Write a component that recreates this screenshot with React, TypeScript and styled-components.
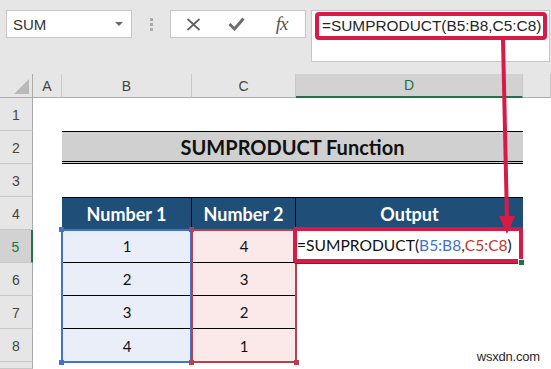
import styled, { createGlobalStyle } from "styled-components";

const GlobalStyle = createGlobalStyle`
  html, body {
    margin: 0;
    padding: 0;
    background: #ffffff;
  }
  body {
    font-family: "Liberation Sans", Arial, sans-serif;
  }
`;

const RED = "#d81b46";
const GREEN = "#217346";

const columns = ["A", "B", "C", "D", ""];
const rows = [1, 2, 3, 4, 5, 6, 7, 8, 9];
const data = [
  [1, 4],
  [2, 3],
  [3, 2],
  [4, 1],
];

export default function App() {
  return (
    <>
      <GlobalStyle />
      <Page>
        <TopBar>
          <NameBox>
            SUM
            <Caret />
          </NameBox>
          <Grip>
            <Dot />
            <Dot />
            <Dot />
          </Grip>
          <Actions>
            <ActionSlot>
              <svg width="15" height="13" viewBox="0 0 15 13">
                <path d="M1.5 1 L13.5 12 M13.5 1 L1.5 12" stroke="#616161" strokeWidth="1.7" fill="none" />
              </svg>
            </ActionSlot>
            <ActionSlot>
              <svg width="17" height="14" viewBox="0 0 17 14">
                <path d="M1.5 7 L6.5 12 L15.5 1.5" stroke="#6e6e6e" strokeWidth="3" fill="none" />
              </svg>
            </ActionSlot>
            <ActionSlot $wide>
              <Fx>fx</Fx>
            </ActionSlot>
          </Actions>
          <FormulaInput>
            <BarCallout>=SUMPRODUCT(B5:B8,C5:C8)</BarCallout>
          </FormulaInput>
        </TopBar>

        <Sheet>
          <Corner>
            <svg width="15" height="15" viewBox="0 0 15 15">
              <polygon points="15,0 15,15 0,15" fill="#b9b9b9" />
            </svg>
          </Corner>
          {columns.map((c) => (
            <ColHead key={c || "E"} $selected={c === "D"}>
              {c}
            </ColHead>
          ))}
          {rows.map((r) => (
            <RowHead key={r} $row={r + 1} $selected={r === 5}>
              {r < 9 ? r : ""}
            </RowHead>
          ))}

          <Title>SUMPRODUCT Function</Title>

          <HeadCell $col={3} $divider>Number 1</HeadCell>
          <HeadCell $col={4} $divider>Number 2</HeadCell>
          <HeadCell $col={5}>Output</HeadCell>

          {data.map(([b, c], i) => (
            <DataRowGroup key={i}>
              <DataCell $col={3} $row={6 + i} $tone="blue" $last={i === 3}>
                {b}
              </DataCell>
              <DataCell $col={4} $row={6 + i} $tone="pink" $last={i === 3}>
                {c}
              </DataCell>
            </DataRowGroup>
          ))}

          <RangeBox $col={3} $color="#4472c4">
            <Handle $v="top" $h="left" $color="#4472c4" />
            <Handle $v="bottom" $h="left" $color="#4472c4" />
            <Handle $v="top" $h="right" $color="#4472c4" />
            <Handle $v="bottom" $h="right" $color="#4472c4" />
          </RangeBox>
          <RangeBox $col={4} $color="#b4424f">
            <Handle $v="top" $h="left" $color="#b4424f" />
            <Handle $v="bottom" $h="left" $color="#b4424f" />
            <Handle $v="top" $h="right" $color="#b4424f" />
            <Handle $v="bottom" $h="right" $color="#b4424f" />
          </RangeBox>

          <CellCallout>
            =SUMPRODUCT(<Ref $color="#4472c4">B5:B8</Ref>,<Ref $color="#c0392f">C5:C8</Ref>)
            <FillHandle />
          </CellCallout>
        </Sheet>

        <Arrow width="551" height="369" viewBox="0 0 551 369">
          <line x1="503" y1="40" x2="507" y2="220" stroke={RED} strokeWidth="4" />
          <polygon points="499,216 515,216 507,234" fill={RED} />
        </Arrow>

        <Watermark>wsxdn.com</Watermark>
      </Page>
    </>
  );
}

const Page = styled.div`
  position: relative;
  width: 551px;
  height: 369px;
  overflow: hidden;
  background: #ffffff;
`;

const TopBar = styled.div`
  height: 74px;
  box-sizing: border-box;
  padding: 10px 1px 0 6px;
  background: #e6e6e6;
  display: flex;
  align-items: flex-start;
`;

const NameBox = styled.div`
  width: 126px;
  height: 28px;
  box-sizing: border-box;
  border: 1px solid #c6c6c6;
  background: #ffffff;
  display: flex;
  align-items: center;
  justify-content: space-between;
  padding: 0 8px 0 6px;
  font-size: 15px;
  color: #333333;
`;

const Caret = styled.span`
  width: 0;
  height: 0;
  border-left: 4px solid transparent;
  border-right: 4px solid transparent;
  border-top: 4px solid #6a6a6a;
`;

const Grip = styled.div`
  width: 38px;
  height: 28px;
  display: flex;
  flex-direction: column;
  align-items: center;
  justify-content: center;
  gap: 2px;
`;

const Dot = styled.span`
  width: 3px;
  height: 3px;
  background: #aaaaaa;
`;

const Actions = styled.div`
  width: 136px;
  height: 28px;
  box-sizing: border-box;
  border: 1px solid #c6c6c6;
  background: #ffffff;
  display: flex;
  align-items: center;
  padding-left: 1px;
`;

const ActionSlot = styled.div<{ $wide?: boolean }>`
  width: ${(p) => (p.$wide ? 48 : 44)}px;
  height: 100%;
  display: flex;
  align-items: center;
  justify-content: center;
`;

const Fx = styled.span`
  font-family: "Liberation Serif", "Times New Roman", serif;
  font-style: italic;
  font-size: 19px;
  color: #555555;
  letter-spacing: -1px;
`;

const FormulaInput = styled.div`
  flex: 1;
  height: 52px;
  margin-left: 5px;
  box-sizing: border-box;
  border: 1px solid #c6c6c6;
  background: #ffffff;
  padding: 1px 0 0 3px;
`;

const BarCallout = styled.div`
  width: 232px;
  height: 28px;
  box-sizing: border-box;
  border: 4px solid ${RED};
  border-radius: 4px;
  display: flex;
  align-items: center;
  padding-left: 3px;
  font-size: 15.4px;
  color: #262626;
  white-space: nowrap;
`;

const Sheet = styled.div`
  position: relative;
  display: grid;
  grid-template-columns: 33px 29px 130px 104px 227px 28px;
  grid-template-rows: 24px repeat(8, 33px) 7px;
  font-family: "Lato", "Liberation Sans", sans-serif;
`;

const Corner = styled.div`
  grid-row: 1;
  grid-column: 1;
  background: #e6e6e6;
  border-right: 1px solid #ababab;
  border-bottom: 1px solid #ababab;
  box-sizing: border-box;
  display: flex;
  align-items: flex-end;
  justify-content: flex-end;
  padding: 0 3px 3px 0;
`;

const ColHead = styled.div<{ $selected?: boolean }>`
  grid-row: 1;
  box-sizing: border-box;
  background: ${(p) => (p.$selected ? "#d2d2d2" : "#e6e6e6")};
  border-right: 1px solid #c8c8c8;
  border-bottom: ${(p) => (p.$selected ? `2px solid ${GREEN}` : "1px solid #ababab")};
  color: ${(p) => (p.$selected ? GREEN : "#444444")};
  font-family: "Liberation Sans", Arial, sans-serif;
  font-size: 14px;
  display: flex;
  align-items: center;
  justify-content: center;
`;

const RowHead = styled.div<{ $row: number; $selected?: boolean }>`
  grid-row: ${(p) => p.$row};
  grid-column: 1;
  box-sizing: border-box;
  background: ${(p) => (p.$selected ? "#d2d2d2" : "#e6e6e6")};
  border-right: ${(p) => (p.$selected ? `2px solid ${GREEN}` : "1px solid #ababab")};
  border-bottom: 1px solid #c8c8c8;
  color: ${(p) => (p.$selected ? GREEN : "#444444")};
  font-family: "Liberation Sans", Arial, sans-serif;
  font-size: 14px;
  display: flex;
  align-items: center;
  justify-content: center;
  padding-top: 2px;
`;

const Title = styled.div`
  grid-row: 3;
  grid-column: 3 / 6;
  box-sizing: border-box;
  background: #d0d0d0;
  border-top: 1px solid #000000;
  border-bottom: 3px double #000000;
  display: flex;
  align-items: center;
  justify-content: center;
  font-weight: 700;
  font-size: 20px;
  color: #111111;
`;

const HeadCell = styled.div<{ $col: number; $divider?: boolean }>`
  grid-row: 5;
  grid-column: ${(p) => p.$col};
  box-sizing: border-box;
  background: #1f4e78;
  border-top: 1px solid #000000;
  border-right: ${(p) => (p.$divider ? "1px solid #000000" : "none")};
  color: #ffffff;
  font-weight: 700;
  font-size: 18px;
  display: flex;
  align-items: center;
  justify-content: center;
`;

const DataRowGroup = styled.div`
  display: contents;
`;

const DataCell = styled.div<{ $col: number; $row: number; $tone: "blue" | "pink"; $last?: boolean }>`
  grid-row: ${(p) => p.$row};
  grid-column: ${(p) => p.$col};
  box-sizing: border-box;
  background: ${(p) => (p.$tone === "blue" ? "#e9eef8" : "#fbe8e8")};
  border-bottom: ${(p) => (p.$last ? "none" : "1px solid #000000")};
  color: #111111;
  font-size: 15px;
  display: flex;
  align-items: center;
  justify-content: center;
`;

const RangeBox = styled.div<{ $col: number; $color: string }>`
  grid-row: 6 / 10;
  grid-column: ${(p) => p.$col};
  position: relative;
  z-index: 2;
  margin: -1px 0 -1px -1px;
  border: 2px solid ${(p) => p.$color};
  ${(p) => (p.$col === 4 ? "margin-right: -1px;" : "")}
`;

const Handle = styled.span<{ $v: "top" | "bottom"; $h: "left" | "right"; $color: string }>`
  position: absolute;
  width: 5px;
  height: 5px;
  background: ${(p) => p.$color};
  ${(p) => p.$v}: -4px;
  ${(p) => p.$h}: -4px;
`;

const CellCallout = styled.div`
  grid-row: 6;
  grid-column: 5;
  position: relative;
  z-index: 3;
  margin: -3px 0 0 -3px;
  box-sizing: border-box;
  border: 4px solid ${RED};
  border-radius: 4px;
  background: #ffffff;
  display: flex;
  align-items: center;
  font-size: 15.6px;
  color: #111111;
  white-space: nowrap;
  box-shadow: 0 1px 0 #1d4d33;
`;

const Ref = styled.span<{ $color: string }>`
  color: ${(p) => p.$color};
`;

const FillHandle = styled.span`
  position: absolute;
  right: -6px;
  bottom: -7px;
  width: 5px;
  height: 5px;
  background: ${GREEN};
  border: 1px solid #ffffff;
`;

const Arrow = styled.svg`
  position: absolute;
  left: 0;
  top: 0;
  z-index: 5;
  pointer-events: none;
`;

const Watermark = styled.div`
  position: absolute;
  right: 11px;
  bottom: 5px;
  z-index: 6;
  font-family: "Liberation Sans", Arial, sans-serif;
  font-size: 13px;
  letter-spacing: -0.2px;
  color: #2a2a2a;
`;
